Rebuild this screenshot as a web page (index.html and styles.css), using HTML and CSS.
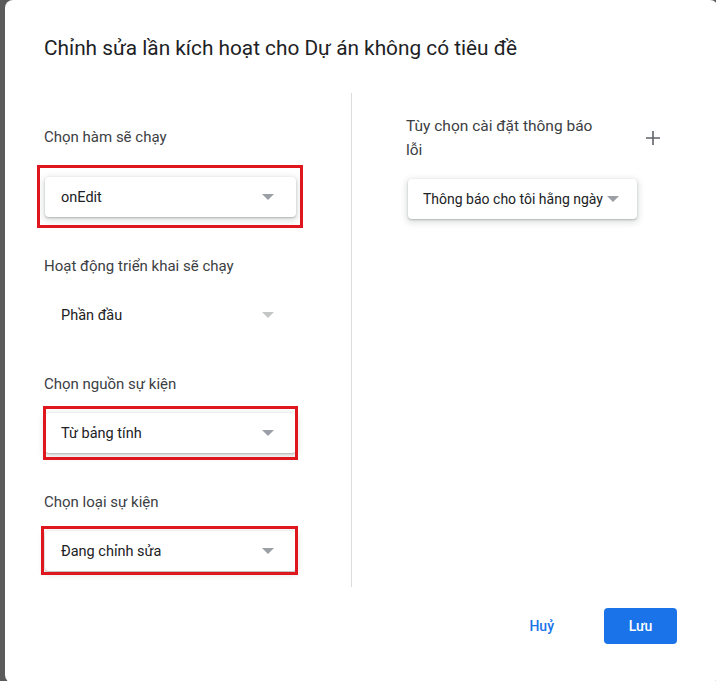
FILE: index.html
```html
<!DOCTYPE html>
<html lang="vi">
<head>
<meta charset="utf-8">
<title>Chỉnh sửa lần kích hoạt</title>
<link rel="stylesheet" href="styles.css">
</head>
<body>
<div class="dialog">
  <h1 class="dialog-title">Chỉnh sửa lần kích hoạt cho Dự án không có tiêu đề</h1>
  <div class="dialog-body">
    <div class="col col-left">
      <div class="field field-first">
        <div class="field-label">Chọn hàm sẽ chạy</div>
        <div class="select raised mark mark-1">
          <span class="select-value">onEdit</span>
          <span class="caret"></span>
        </div>
      </div>
      <div class="field">
        <div class="field-label">Hoạt động triển khai sẽ chạy</div>
        <div class="select disabled">
          <span class="select-value">Phần đầu</span>
          <span class="caret"></span>
        </div>
      </div>
      <div class="field">
        <div class="field-label">Chọn nguồn sự kiện</div>
        <div class="select raised mark mark-2">
          <span class="select-value">Từ bảng tính</span>
          <span class="caret"></span>
        </div>
      </div>
      <div class="field">
        <div class="field-label">Chọn loại sự kiện</div>
        <div class="select raised mark mark-3">
          <span class="select-value">Đang chỉnh sửa</span>
          <span class="caret"></span>
        </div>
      </div>
    </div>
    <div class="divider"></div>
    <div class="col col-right">
      <div class="notify-head">
        <div class="notify-label">Tùy chọn cài đặt thông báo lỗi</div>
        <button class="icon-btn" type="button" aria-label="Thêm">
          <svg width="16" height="16" viewBox="0 0 16 16"><path d="M8 1v14M1 8h14" stroke="#5f6368" stroke-width="1.6" fill="none"/></svg>
        </button>
      </div>
      <div class="select raised select-inline">
        <span class="select-value">Thông báo cho tôi hằng ngày</span>
        <span class="caret"></span>
      </div>
    </div>
  </div>
  <div class="dialog-actions">
    <button class="btn btn-text" type="button">Huỷ</button>
    <button class="btn btn-primary" type="button">Lưu</button>
  </div>
</div>
</body>
</html>
```

FILE: styles.css
```css
html, body {
  margin: 0;
  height: 100%;
}

body {
  background: #5b5b5b;
  font-family: Roboto, "Noto Sans", Arial, sans-serif;
  overflow: hidden;
}

.dialog {
  margin-left: 5px;
  width: 713px;
  height: 683px;
  background: #fff;
  border-radius: 8px;
  box-sizing: border-box;
  display: flex;
  flex-direction: column;
}

.dialog-title {
  margin: 34px 0 0 39px;
  font-size: 20.8px;
  line-height: 28px;
  font-weight: 400;
  color: #202124;
  letter-spacing: 0;
}

.dialog-body {
  margin-top: 31px;
  display: flex;
  height: 494px;
}

.col-left {
  width: 346px;
  padding-left: 39px;
  padding-top: 34px;
  box-sizing: border-box;
  flex: none;
}

.divider {
  width: 1px;
  background: #dadce0;
  flex: none;
}

.col-right {
  padding: 21px 0 0 54px;
  width: 260px;
}

.field {
  margin-bottom: 39px;
}

.field-label {
  font-size: 15px;
  line-height: 20px;
  color: #3c4043;
  margin-bottom: 19px;
}

.field-first .field-label {
  margin-bottom: 30px;
}

.select {
  position: relative;
  height: 40px;
  width: 251px;
  margin-left: 1px;
  display: flex;
  align-items: center;
  padding: 0 22px 0 16px;
  box-sizing: border-box;
  border-radius: 4px;
  font-size: 14.5px;
  color: #202124;
  background: #fff;
}

.select.raised {
  box-shadow: 0 1px 2px rgba(60, 64, 67, 0.3), 0 2px 6px 2px rgba(60, 64, 67, 0.15);
}

.select-value {
  flex: 1;
  white-space: nowrap;
}

.caret {
  width: 0;
  height: 0;
  border-left: 6px solid transparent;
  border-right: 6px solid transparent;
  border-top: 6px solid #9aa0a6;
  margin-left: 6px;
}

.select.disabled .caret {
  border-top-color: #c4c7c5;
}

/* red highlight frames drawn over the selected fields */
.mark::after {
  content: "";
  position: absolute;
  border: 3px solid #e0161e;
  pointer-events: none;
}

.mark-1::after { left: -8px; right: -7px; top: -12px; bottom: -11px; }
.mark-2::after { left: -2px; right: -2px; top: -7px; bottom: -7px; }
.mark-3::after { left: -4px; right: -2px; top: -5px; bottom: -4px; }

.notify-head {
  display: flex;
  align-items: center;
  justify-content: space-between;
}

.notify-label {
  width: 192px;
  font-size: 15.5px;
  line-height: 24px;
  color: #3c4043;
}

.icon-btn {
  border: 0;
  background: none;
  padding: 0;
  width: 16px;
  height: 16px;
  margin-right: 5px;
  display: flex;
}

.select-inline {
  width: auto;
  display: inline-flex;
  margin: 17px 0 0 2px;
  padding: 0 18px 0 15px;
  font-size: 14px;
}

.select-inline .caret {
  margin-left: 4px;
}

.dialog-actions {
  margin-top: 21px;
  display: flex;
  justify-content: flex-end;
  align-items: center;
  padding-right: 41px;
  gap: 26px;
}

.btn {
  font-family: Roboto, Arial, sans-serif;
  font-size: 14px;
  font-weight: 500;
  border: 0;
  height: 36px;
  border-radius: 4px;
  padding: 0 24px;
  cursor: pointer;
}

.btn-text {
  background: none;
  color: #1a73e8;
}

.btn-primary {
  background: #1a73e8;
  color: #fff;
  width: 73px;
  padding: 0;
}
```
